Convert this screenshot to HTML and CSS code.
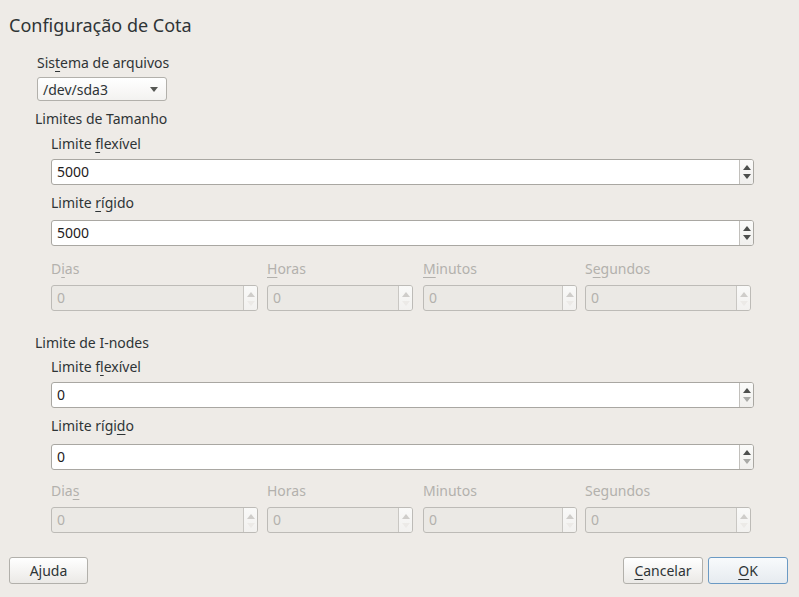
FILE: index.html
```html
<!DOCTYPE html>
<html lang="pt">
<head>
<meta charset="utf-8">
<title>Configuração de Cota</title>
<link rel="stylesheet" href="styles.css">
</head>
<body>
<div class="dialog">
  <h1 class="title">Configuração de Cota</h1>

  <div class="fs">
    <div class="label">Sis<u>t</u>ema de arquivos</div>
    <div class="combo">
      <span>/dev/sda3</span>
      <svg class="combo-arrow" width="8" height="5" viewBox="0 0 8 5"><path d="M0 0H8L4 5Z" fill="#555753"/></svg>
    </div>
  </div>

  <div class="section s1">
    <div class="section-title">Limites de Tamanho</div>
    <div class="section-body">
      <div class="label l-soft">Limite <u>f</u>lexível</div>
      <div class="spin">
        <div class="spin-text">5000</div>
        <div class="spin-btns">
          <svg width="8" height="5" viewBox="0 0 8 5"><path d="M0 5H8L4 0Z" fill="#4d4f4d"/></svg>
          <svg width="8" height="5" viewBox="0 0 8 5"><path d="M0 0H8L4 5Z" fill="#4d4f4d"/></svg>
        </div>
      </div>
      <div class="label l-hard">Limite <u>r</u>ígido</div>
      <div class="spin">
        <div class="spin-text">5000</div>
        <div class="spin-btns">
          <svg width="8" height="5" viewBox="0 0 8 5"><path d="M0 5H8L4 0Z" fill="#4d4f4d"/></svg>
          <svg width="8" height="5" viewBox="0 0 8 5"><path d="M0 0H8L4 5Z" fill="#4d4f4d"/></svg>
        </div>
      </div>
      <div class="grace">
        <div class="gcol c1">
          <div class="label dis">D<u>i</u>as</div>
          <div class="spin disabled"><div class="spin-text">0</div><div class="spin-btns"><svg width="8" height="5" viewBox="0 0 8 5"><path d="M0 5H8L4 0Z" fill="#cfcdca"/></svg><svg width="8" height="5" viewBox="0 0 8 5"><path d="M0 0H8L4 5Z" fill="#eceae7"/></svg></div></div>
        </div>
        <div class="gcol c2">
          <div class="label dis"><u>H</u>oras</div>
          <div class="spin disabled"><div class="spin-text">0</div><div class="spin-btns"><svg width="8" height="5" viewBox="0 0 8 5"><path d="M0 5H8L4 0Z" fill="#cfcdca"/></svg><svg width="8" height="5" viewBox="0 0 8 5"><path d="M0 0H8L4 5Z" fill="#eceae7"/></svg></div></div>
        </div>
        <div class="gcol c3">
          <div class="label dis"><u>M</u>inutos</div>
          <div class="spin disabled"><div class="spin-text">0</div><div class="spin-btns"><svg width="8" height="5" viewBox="0 0 8 5"><path d="M0 5H8L4 0Z" fill="#cfcdca"/></svg><svg width="8" height="5" viewBox="0 0 8 5"><path d="M0 0H8L4 5Z" fill="#eceae7"/></svg></div></div>
        </div>
        <div class="gcol c4">
          <div class="label dis">S<u>e</u>gundos</div>
          <div class="spin disabled"><div class="spin-text">0</div><div class="spin-btns"><svg width="8" height="5" viewBox="0 0 8 5"><path d="M0 5H8L4 0Z" fill="#cfcdca"/></svg><svg width="8" height="5" viewBox="0 0 8 5"><path d="M0 0H8L4 5Z" fill="#eceae7"/></svg></div></div>
        </div>
      </div>
    </div>
  </div>

  <div class="section s2">
    <div class="section-title">Limite de I-nodes</div>
    <div class="section-body">
      <div class="label l-soft">Limite f<u>l</u>exível</div>
      <div class="spin">
        <div class="spin-text">0</div>
        <div class="spin-btns">
          <svg width="8" height="5" viewBox="0 0 8 5"><path d="M0 5H8L4 0Z" fill="#4d4f4d"/></svg>
          <svg width="8" height="5" viewBox="0 0 8 5"><path d="M0 0H8L4 5Z" fill="#a9aaa7"/></svg>
        </div>
      </div>
      <div class="label l-hard">Limite rígi<u>d</u>o</div>
      <div class="spin">
        <div class="spin-text">0</div>
        <div class="spin-btns">
          <svg width="8" height="5" viewBox="0 0 8 5"><path d="M0 5H8L4 0Z" fill="#4d4f4d"/></svg>
          <svg width="8" height="5" viewBox="0 0 8 5"><path d="M0 0H8L4 5Z" fill="#a9aaa7"/></svg>
        </div>
      </div>
      <div class="grace">
        <div class="gcol c1">
          <div class="label dis">Dia<u>s</u></div>
          <div class="spin disabled"><div class="spin-text">0</div><div class="spin-btns"><svg width="8" height="5" viewBox="0 0 8 5"><path d="M0 5H8L4 0Z" fill="#cfcdca"/></svg><svg width="8" height="5" viewBox="0 0 8 5"><path d="M0 0H8L4 5Z" fill="#eceae7"/></svg></div></div>
        </div>
        <div class="gcol c2">
          <div class="label dis">Horas</div>
          <div class="spin disabled"><div class="spin-text">0</div><div class="spin-btns"><svg width="8" height="5" viewBox="0 0 8 5"><path d="M0 5H8L4 0Z" fill="#cfcdca"/></svg><svg width="8" height="5" viewBox="0 0 8 5"><path d="M0 0H8L4 5Z" fill="#eceae7"/></svg></div></div>
        </div>
        <div class="gcol c3">
          <div class="label dis">Minutos</div>
          <div class="spin disabled"><div class="spin-text">0</div><div class="spin-btns"><svg width="8" height="5" viewBox="0 0 8 5"><path d="M0 5H8L4 0Z" fill="#cfcdca"/></svg><svg width="8" height="5" viewBox="0 0 8 5"><path d="M0 0H8L4 5Z" fill="#eceae7"/></svg></div></div>
        </div>
        <div class="gcol c4">
          <div class="label dis">Segundos</div>
          <div class="spin disabled"><div class="spin-text">0</div><div class="spin-btns"><svg width="8" height="5" viewBox="0 0 8 5"><path d="M0 5H8L4 0Z" fill="#cfcdca"/></svg><svg width="8" height="5" viewBox="0 0 8 5"><path d="M0 0H8L4 5Z" fill="#eceae7"/></svg></div></div>
        </div>
      </div>
    </div>
  </div>

  <div class="footer">
    <button class="btn btn-help">Ajuda</button>
    <div class="footer-right">
      <button class="btn btn-cancel"><u>C</u>ancelar</button>
      <button class="btn btn-ok"><u>O</u>K</button>
    </div>
  </div>
</div>
</body>
</html>
```

FILE: styles.css
```css
* { box-sizing: border-box; }

html, body {
  margin: 0;
  padding: 0;
  width: 799px;
  height: 597px;
  overflow: hidden;
  background: #eeebe7;
}

body {
  font-family: "Noto Sans", "DejaVu Sans", sans-serif;
  font-size: 14px;
  color: #2e3436;
  font-variant-ligatures: none;
  font-feature-settings: "liga" 0;
}

.dialog {
  height: 597px;
  display: flex;
  flex-direction: column;
}

u {
  text-decoration: underline;
  text-underline-offset: 3px;
  text-decoration-thickness: 1px;
  text-decoration-skip-ink: none;
}

.title {
  margin: 13px 0 0 9px;
  font-size: 18px;
  font-weight: normal;
  line-height: 24px;
}

.label {
  line-height: 20px;
  height: 20px;
  white-space: nowrap;
}

.fs {
  margin: 16px 0 0 37px;
}

.combo {
  margin-top: 4px;
  width: 130px;
  height: 24px;
  border: 1px solid #b2b0ab;
  border-radius: 3px;
  background: linear-gradient(#ffffff, #f3f2f0);
  display: flex;
  align-items: center;
  justify-content: space-between;
  padding: 0 8px 0 5px;
}

.combo-arrow { margin-top: 1px; }

.section {
  padding-left: 35px;
}

.s1 { margin-top: 8px; }
.s2 { margin-top: 22px; }

.section-body {
  padding-left: 16px;
  width: 754px;
}

.section-title {
  line-height: 20px;
  height: 20px;
}

.l-soft { margin-top: 5px; }
.l-hard { margin-top: 8px; }

.spin {
  margin-top: 5px;
  height: 26px;
  width: 703px;
  border: 1px solid #a9a7a2;
  border-radius: 3px;
  background: #ffffff;
  display: flex;
}

.l-hard + .spin { margin-top: 7px; }

.spin-text {
  flex: 1;
  padding-left: 5px;
  line-height: 24px;
  color: #1e2021;
}

.spin-btns {
  width: 14px;
  border-left: 1px solid #c2c0bc;
  background: linear-gradient(#fbfbfa, #f0efed);
  border-radius: 0 2px 2px 0;
  display: flex;
  flex-direction: column;
  justify-content: space-evenly;
  align-items: center;
  padding: 1px 0;
}

.spin-btns svg { display: block; }

.grace {
  margin-top: 13px;
  display: flex;
}

.c1 { width: 207px; }
.c2 { width: 146px; margin-left: 9px; }
.c3 { width: 154px; margin-left: 10px; }
.c4 { width: 166px; margin-left: 8px; }

.dis { color: #b3b1ad; }

.spin.disabled {
  width: 100%;
  height: 26px;
  margin-top: 6px;
  border-color: #bdbbb7;
  background: #ebe9e5;
}

.spin.disabled .spin-text {
  color: #b3b1ad;
  line-height: 24px;
}

.spin.disabled .spin-btns {
  background: linear-gradient(#f9f9f8, #f2f1ef);
  border-left-color: #c9c7c3;
  justify-content: space-between;
  padding: 6px 0 4px;
}

.s2 .l-soft { margin-top: 4px; }
.s2 .l-hard + .spin { margin-top: 8px; }
.s2 .grace { margin-top: 11px; }

.footer {
  margin-top: auto;
  margin-bottom: 13px;
  padding: 0 11px 0 9px;
  display: flex;
  justify-content: space-between;
}

.footer-right {
  display: flex;
  gap: 5px;
}

.btn {
  height: 27px;
  width: 80px;
  font-family: inherit;
  font-size: 14px;
  color: #2e3436;
  border: 1px solid #b2b0ab;
  border-radius: 3px;
  background: linear-gradient(#ffffff, #ebe9e6);
  padding: 0;
  line-height: 25px;
}

.btn-help { width: 79px; }
.btn-ok {
  border-color: #6b9ac4;
  background: linear-gradient(#f8fafc, #e6ebef);
}
```
